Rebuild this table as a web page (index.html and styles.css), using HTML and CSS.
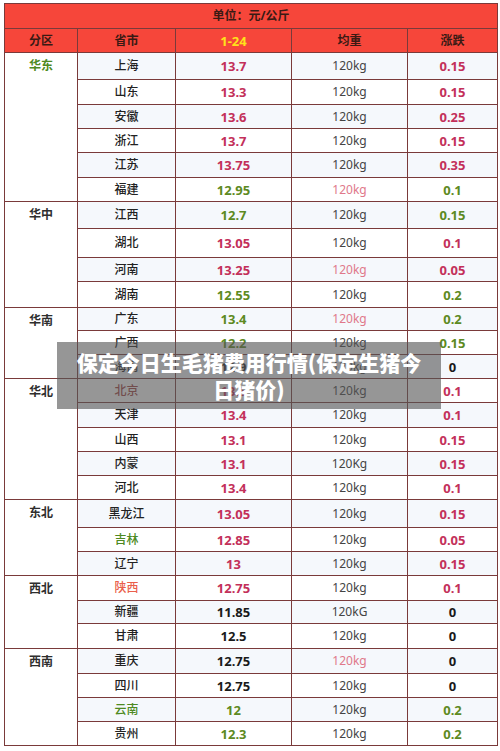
FILE: index.html
```html
<!DOCTYPE html>
<html lang="zh">
<head>
<meta charset="utf-8">
<title>保定今日生毛猪费用行情</title>
<link rel="stylesheet" href="styles.css">
</head>
<body>
<div class="page">
<table class="price">
  <colgroup>
    <col class="c1"><col class="c2"><col class="c3"><col class="c4"><col class="c5">
  </colgroup>
  <tr class="title h25"><td colspan="5">单位：元/公斤</td></tr>
  <tr class="head h24"><td>分区</td><td>省市</td><td class="date">1-24</td><td>均重</td><td>涨跌</td></tr>

  <tr class="h27 alt"><td class="region green" rowspan="6">华东</td><td class="prov">上海</td><td class="val r">13.7</td><td class="wt">120kg</td><td class="val r">0.15</td></tr>
  <tr class="h25"><td class="prov">山东</td><td class="val r">13.3</td><td class="wt">120kg</td><td class="val r">0.15</td></tr>
  <tr class="h24 alt"><td class="prov">安徽</td><td class="val r">13.6</td><td class="wt">120kg</td><td class="val r">0.25</td></tr>
  <tr class="h24"><td class="prov">浙江</td><td class="val r">13.7</td><td class="wt">120kg</td><td class="val r">0.15</td></tr>
  <tr class="h25 alt"><td class="prov">江苏</td><td class="val r">13.75</td><td class="wt">120kg</td><td class="val r">0.35</td></tr>
  <tr class="h24"><td class="prov">福建</td><td class="val g">12.95</td><td class="wt pink">120kg</td><td class="val g">0.1</td></tr>

  <tr class="h27 alt"><td class="region" rowspan="4">华中</td><td class="prov">江西</td><td class="val g">12.7</td><td class="wt">120kg</td><td class="val g">0.15</td></tr>
  <tr class="h29"><td class="prov">湖北</td><td class="val r">13.05</td><td class="wt">120kg</td><td class="val r">0.1</td></tr>
  <tr class="h24 alt"><td class="prov">河南</td><td class="val r">13.25</td><td class="wt pink">120kg</td><td class="val r">0.05</td></tr>
  <tr class="h26"><td class="prov">湖南</td><td class="val g">12.55</td><td class="wt">120kg</td><td class="val g">0.2</td></tr>

  <tr class="h23 alt"><td class="region" rowspan="3">华南</td><td class="prov">广东</td><td class="val g">13.4</td><td class="wt pink">120kg</td><td class="val g">0.2</td></tr>
  <tr class="h24"><td class="prov">广西</td><td class="val g">12.2</td><td class="wt">120kg</td><td class="val g">0.15</td></tr>
  <tr class="h24 alt"><td class="prov">海南</td><td class="val k">12.9</td><td class="wt">120kg</td><td class="val k">0</td></tr>

  <tr class="h24"><td class="region" rowspan="5">华北</td><td class="prov brown">北京</td><td class="val r">13.5</td><td class="wt">120kg</td><td class="val r">0.1</td></tr>
  <tr class="h25 alt"><td class="prov">天津</td><td class="val r">13.4</td><td class="wt">120kg</td><td class="val r">0.1</td></tr>
  <tr class="h24"><td class="prov">山西</td><td class="val r">13.1</td><td class="wt">120kg</td><td class="val r">0.15</td></tr>
  <tr class="h24 alt"><td class="prov">内蒙</td><td class="val r">13.1</td><td class="wt">120Kg</td><td class="val r">0.15</td></tr>
  <tr class="h24"><td class="prov">河北</td><td class="val r">13.4</td><td class="wt">120kg</td><td class="val r">0.1</td></tr>

  <tr class="h28 alt"><td class="region" rowspan="3">东北</td><td class="prov">黑龙江</td><td class="val r">13.05</td><td class="wt">120kg</td><td class="val r">0.15</td></tr>
  <tr class="h24"><td class="prov green">吉林</td><td class="val r">12.85</td><td class="wt">120kg</td><td class="val r">0.05</td></tr>
  <tr class="h24 alt"><td class="prov">辽宁</td><td class="val r">13</td><td class="wt">120kg</td><td class="val r">0.15</td></tr>

  <tr class="h25"><td class="region" rowspan="3">西北</td><td class="prov salmon">陕西</td><td class="val r">12.75</td><td class="wt">120kg</td><td class="val r">0.1</td></tr>
  <tr class="h23 alt"><td class="prov">新疆</td><td class="val k">11.85</td><td class="wt">120kG</td><td class="val k">0</td></tr>
  <tr class="h25"><td class="prov">甘肃</td><td class="val k">12.5</td><td class="wt">120kg</td><td class="val k">0</td></tr>

  <tr class="h25 alt"><td class="region" rowspan="4">西南</td><td class="prov">重庆</td><td class="val k">12.75</td><td class="wt pink">120kg</td><td class="val k">0</td></tr>
  <tr class="h24"><td class="prov">四川</td><td class="val k">12.75</td><td class="wt">120kg</td><td class="val k">0</td></tr>
  <tr class="h24 alt"><td class="prov green">云南</td><td class="val g">12</td><td class="wt">120kg</td><td class="val g">0.2</td></tr>
  <tr class="h24"><td class="prov">贵州</td><td class="val g">12.3</td><td class="wt">120kg</td><td class="val g">0.2</td></tr>
</table>

<div class="caption">保定今日生毛猪费用行情(保定生猪今<br>日猪价)</div>
</div>
</body>
</html>
```

FILE: styles.css
```css
html, body {
  margin: 0;
  padding: 0;
  background: #ffffff;
}

.page {
  position: relative;
  width: 500px;
  height: 751px;
  overflow: hidden;
  font-family: "Noto Sans", "Noto Sans CJK SC", sans-serif;
}

.price {
  margin: 3px 0 0 4px;
  width: 493px;
  border-collapse: collapse;
  table-layout: fixed;
  font-size: 12px;
  color: #2a2a2a;
}

.price td {
  border: 1px solid #7a3a3a;
  text-align: center;
  vertical-align: middle;
  padding: 0;
  line-height: 16px;
}

.c1 { width: 73px; }
.c2 { width: 98px; }
.c3 { width: 116px; }
.c4 { width: 116px; }
.c5 { width: 90px; }

.title td,
.head td {
  background: #f6463a;
  color: #3a1a14;
  font-weight: bold;
  font-size: 12px;
}

.head .date {
  color: #ffe21a;
  font-size: 13px;
}

.alt td { background: #f5f8fc; }
.price td.region { background: #ffffff; }

.region {
  vertical-align: top !important;
  padding-top: 5px !important;
  font-weight: bold;
  color: #2e2e2e;
}

.prov {
  font-weight: 500;
  color: #222222;
}

.val {
  font-weight: bold;
  font-size: 13px;
}

.wt {
  color: #444444;
  font-size: 12px;
}

.r { color: #c3305a; }
.g { color: #5d8a22; }
.k { color: #1a1a1a; }
.pink { color: #e0788a; }
.green { color: #4e8a22; }
.brown { color: #a04040; }
.salmon { color: #ea5f4c; }

.h23 { height: 23px; }
.h24 { height: 24px; }
.h25 { height: 25px; }
.h26 { height: 26px; }
.h27 { height: 27px; }
.h28 { height: 28px; }
.h29 { height: 29px; }

.caption {
  position: absolute;
  left: 57px;
  top: 342px;
  width: 384px;
  height: 67px;
  box-sizing: border-box;
  padding: 7px 10px 0;
  background: rgba(85, 85, 85, 0.62);
  color: #ffffff;
  font-weight: 900;
  font-size: 21px;
  line-height: 27px;
  text-align: center;
  font-family: "Noto Sans CJK SC", sans-serif;
}
```
